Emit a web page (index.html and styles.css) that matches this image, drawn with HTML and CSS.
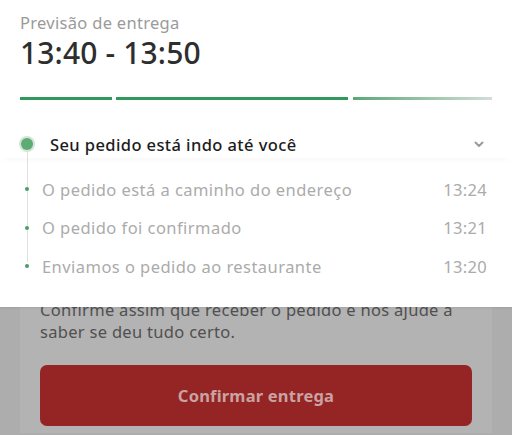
FILE: index.html
```html
<!DOCTYPE html>
<html lang="pt-BR">
<head>
<meta charset="utf-8">
<link rel="stylesheet" href="styles.css">
</head>
<body>
<div class="screen">
  <div class="backdrop">
    <div class="card">
      <p class="card-text">Confirme assim que receber o pedido e nos ajude a saber se deu tudo certo.</p>
      <button class="confirm">Confirmar entrega</button>
    </div>
  </div>
  <div class="sheet">
    <div class="eta">
      <div class="eta-label">Previsão de entrega</div>
      <div class="eta-time">13:40 - 13:50</div>
    </div>
    <div class="progress">
      <span class="seg seg-1"></span>
      <span class="seg seg-2"></span>
      <span class="seg seg-3"></span>
    </div>
    <div class="timeline">
      <div class="current">
        <span class="big-dot"></span>
        <span class="current-text">Seu pedido está indo até você</span>
        <svg class="chev" width="10" height="7" viewBox="0 0 10 7"><path d="M1.5 1.5 L5 5 L8.5 1.5" fill="none" stroke="#9a9a9a" stroke-width="2" stroke-linecap="round" stroke-linejoin="round"/></svg>
      </div>
      <ul class="steps">
        <li class="step"><span class="small-dot"></span><span class="step-text">O pedido está a caminho do endereço</span><span class="step-time">13:24</span></li>
        <li class="step"><span class="small-dot"></span><span class="step-text">O pedido foi confirmado</span><span class="step-time">13:21</span></li>
        <li class="step"><span class="small-dot"></span><span class="step-text">Enviamos o pedido ao restaurante</span><span class="step-time">13:20</span></li>
      </ul>
    </div>
  </div>
</div>
</body>
</html>
```

FILE: styles.css
```css
* { box-sizing: border-box; }
html, body { margin: 0; padding: 0; }
body {
  width: 512px;
  height: 435px;
  overflow: hidden;
  font-family: "Noto Sans", "Liberation Sans", sans-serif;
  background: #adadad;
}
.screen {
  position: relative;
  width: 512px;
  height: 435px;
}
.backdrop {
  padding: 299px 20px 0 20px;
}
.card {
  background: #b3b3b3;
  height: 134px;
  padding: 0 20px;
  display: flex;
  flex-direction: column;
}
.card-text {
  margin: 0;
  font-size: 16.5px;
  line-height: 22px;
  letter-spacing: 0.3px;
  color: #505050;
}
.confirm {
  margin-top: 22px;
  height: 61px;
  width: 100%;
  border: none;
  border-radius: 7px;
  background: #952424;
  color: #c9a2a2;
  font-family: inherit;
  font-size: 16.5px;
  font-weight: 700;
  letter-spacing: 0.2px;
}
.sheet {
  position: absolute;
  top: 0;
  left: 0;
  width: 512px;
  height: 307px;
  background: #fff;
  box-shadow: 0 1px 2px rgba(0,0,0,0.08);
}
.eta {
  padding: 13px 20px 0 20px;
}
.eta-label {
  font-size: 16.5px;
  line-height: 20px;
  letter-spacing: 0.3px;
  color: #9a9a9a;
}
.eta-time {
  margin-top: 2px;
  font-size: 30px;
  line-height: 36px;
  font-weight: 500;
  letter-spacing: 0.15px;
  color: #2e2e2e;
}
.progress {
  display: flex;
  margin: 26px 20px 0 20px;
  height: 3px;
}
.seg { display: block; height: 3px; }
.seg-1 { width: 92px; background: #2f9a5c; }
.seg-2 { width: 232px; margin-left: 4px; background: #2f9a5c; }
.seg-3 { width: 139px; margin-left: 5px; background: linear-gradient(90deg, #5aa877, #d3ddd6); }
.timeline {
  position: relative;
  margin-top: 30px;
}
.timeline::before {
  content: "";
  position: absolute;
  left: 27px;
  top: 22px;
  height: 110px;
  width: 1px;
  background: #e2e2e2;
}
.current {
  position: relative;
  display: flex;
  align-items: center;
  height: 28px;
  padding: 0 28px 0 21px;
  box-shadow: 0 6px 8px -6px rgba(0,0,0,0.05);
}
.big-dot {
  width: 12px;
  height: 12px;
  border-radius: 50%;
  background: #5fab76;
  box-shadow: 0 0 0 2px rgba(95,171,118,0.3);
  flex: none;
}
.current-text {
  margin-left: 17px;
  font-size: 16.5px;
  font-weight: 500;
  letter-spacing: 0.4px;
  color: #1c1c1c;
  flex: 1;
}
.chev { flex: none; }
.steps {
  list-style: none;
  margin: 0;
  padding: 0 25px 0 25px;
  position: relative;
}
.step {
  display: flex;
  align-items: center;
  position: relative;
  height: 22px;
}
.step:first-child { margin-top: 20px; }
.step + .step { margin-top: 16.5px; }
.small-dot {
  width: 4px;
  height: 4px;
  border-radius: 50%;
  background: #4a9e66;
  flex: none;
  position: relative;
}
.step-text {
  margin-left: 13px;
  flex: 1;
  font-size: 16.5px;
  letter-spacing: 0.45px;
  color: #ababab;
}
.step-time {
  font-size: 16.5px;
  letter-spacing: 0.3px;
  color: #ababab;
}
```
